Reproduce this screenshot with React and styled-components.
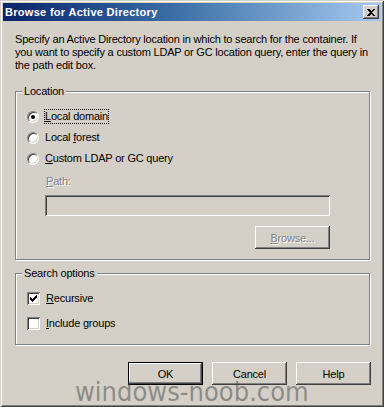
import React from 'react'
import styled, { createGlobalStyle, css } from 'styled-components'

const GlobalStyle = createGlobalStyle`
  html, body { margin: 0; padding: 0; background: #D4D0C8; }
  * { box-sizing: border-box; }
`

const face = '#D4D0C8'
const uiFont = `"Liberation Sans", Arial, sans-serif`

const Window = styled.div`
  position: relative;
  width: 384px;
  height: 407px;
  padding: 3px;
  overflow: hidden;
  background: ${face};
  display: flex;
  flex-direction: column;
  font-family: ${uiFont};
  font-size: 11px;
  letter-spacing: -0.2px;
  color: #000;
  box-shadow: inset 1px 1px ${face}, inset -1px -1px #404040, inset 2px 2px #fff, inset -2px -2px #808080;
`

const TitleBar = styled.div`
  height: 18px;
  display: flex;
  align-items: center;
  justify-content: space-between;
  padding: 0 2px 0 2px;
  background: linear-gradient(90deg, #0A246A 0%, #3A6EA5 45%, #A6CAF0 100%);
`

const Title = styled.span`
  color: #fff;
  font-weight: bold;
  font-size: 11px;
  letter-spacing: 0.3px;
`

const CloseBtn = styled.div`
  width: 16px;
  height: 14px;
  display: flex;
  align-items: center;
  justify-content: center;
  background: ${face};
  box-shadow: inset -1px -1px #404040, inset 1px 1px #fff, inset -2px -2px #808080;
`

const Content = styled.div`
  flex: 1;
  display: flex;
  flex-direction: column;
  padding: 12px 11px 0 12px;
`

const Description = styled.p`
  margin: 0;
  line-height: 13px;
`

const Group = styled.fieldset`
  margin: ${p => p.$top}px 0 0 0;
  padding: ${p => p.$pt}px 0 ${p => p.$pb}px 0;
  min-width: 0;
  border: 1px solid #808080;
  box-shadow: 1px 1px #fff, inset 1px 1px #fff;
  display: flex;
  flex-direction: column;
`

const Legend = styled.legend`
  margin-left: 6px;
  padding: 0 2px;
  line-height: 13px;
  background: ${face};
`

const OptionRow = styled.label`
  height: 21px;
  display: flex;
  align-items: center;
  gap: 6px;
  padding-left: 11px;
  margin-top: ${p => p.$gap || 0}px;
`

const RadioMark = styled.span`
  position: relative;
  width: 12px;
  height: 12px;
  flex: none;
  border-radius: 50%;
  background: #fff;
  border: 1px solid;
  border-color: #808080 #fff #fff #808080;
  box-shadow: inset 1px 1px #404040, inset -1px -1px ${face};
  ${p => p.$checked && css`
    &::after {
      content: '';
      position: absolute;
      left: 3px;
      top: 3px;
      width: 4px;
      height: 4px;
      border-radius: 50%;
      background: #000;
    }
  `}
`

const CheckMark = styled.span`
  width: 13px;
  height: 13px;
  flex: none;
  display: flex;
  align-items: center;
  justify-content: center;
  background: #fff;
  box-shadow: inset 1px 1px #808080, inset -1px -1px #fff, inset 2px 2px #404040, inset -2px -2px ${face};
`

const Caption = styled.span`
  line-height: 13px;
  ${p => p.$focus && css`
    outline: 1px dotted #000;
    outline-offset: 0;
  `}
`

const Key = styled.span`
  text-decoration: underline;
`

const Disabled = styled.span`
  color: #808080;
  text-shadow: 1px 1px #fff;
`

const PathLabel = styled.div`
  margin: 6px 0 0 30px;
  line-height: 13px;
`

const PathInput = styled.div`
  width: 285px;
  height: 21px;
  margin: 7px 0 0 29px;
  background: ${face};
  box-shadow: inset 1px 1px #808080, inset -1px -1px #fff, inset 2px 2px #404040, inset -2px -2px ${face};
`

const Button = styled.button`
  width: 75px;
  height: 23px;
  padding: 0;
  border: none;
  background: ${face};
  font-family: ${uiFont};
  font-size: 11px;
  letter-spacing: -0.2px;
  color: #000;
  box-shadow: inset -1px -1px #404040, inset 1px 1px #fff, inset -2px -2px #808080, inset 2px 2px ${face};
  ${p => p.$default && css`
    box-shadow: inset 0 0 0 1px #000, inset -2px -2px #404040, inset 2px 2px #fff, inset -3px -3px #808080;
  `}
`

const BrowseRow = styled.div`
  display: flex;
  justify-content: flex-end;
  margin: 10px 39px 0 0;
`

const ButtonBar = styled.div`
  display: flex;
  justify-content: flex-end;
  gap: 9px;
  margin: 17px -1px 0 0;
`

const Watermark = styled.div`
  position: absolute;
  left: 75px;
  top: 377px;
  font-family: "DejaVu Sans Condensed", "DejaVu Sans", sans-serif;
  font-size: 27px;
  line-height: 30px;
  letter-spacing: 0;
  color: rgba(70, 70, 70, 0.5);
  pointer-events: none;
  white-space: nowrap;
`

function Radio({ checked, focus, children }) {
  return (
    <OptionRow $gap={0}>
      <RadioMark $checked={checked} />
      <Caption $focus={focus}>{children}</Caption>
    </OptionRow>
  )
}

function Check({ checked, gap, children }) {
  return (
    <OptionRow $gap={gap}>
      <CheckMark>
        {checked && (
          <svg width="7" height="7" viewBox="0 0 7 7" shapeRendering="crispEdges">
            <path d="M0 2h1v1h1v1h1v-1h1v-1h1v-1h1v-1h1v3h-1v1h-1v1h-1v1h-1v1h-1v-1h-1v-1h-1z" fill="#000" />
          </svg>
        )}
      </CheckMark>
      <Caption>{children}</Caption>
    </OptionRow>
  )
}

export default function App() {
  return (
    <>
      <GlobalStyle />
      <Window>
        <TitleBar>
          <Title>Browse for Active Directory</Title>
          <CloseBtn>
            <svg width="8" height="7" viewBox="0 0 8 7" shapeRendering="crispEdges">
              <path d="M0 0h2l2 2 2-2h2L5 3.5 8 7H6L4 5 2 7H0l3-3.5z" fill="#000" />
            </svg>
          </CloseBtn>
        </TitleBar>
        <Content>
          <Description>
            Specify an Active Directory location in which to search for the container. If
            you want to specify a custom LDAP or GC location query, enter the query in
            the path edit box.
          </Description>

          <Group $top={13} $pt={8} $pb={10}>
            <Legend>Location</Legend>
            <Radio checked focus><Key>L</Key>ocal domain</Radio>
            <Radio>Local <Key>f</Key>orest</Radio>
            <Radio><Key>C</Key>ustom LDAP or GC query</Radio>
            <PathLabel><Disabled><Key>P</Key>ath:</Disabled></PathLabel>
            <PathInput />
            <BrowseRow>
              <Button disabled><Disabled><Key>B</Key>rowse...</Disabled></Button>
            </BrowseRow>
          </Group>

          <Group $top={7} $pt={8} $pb={10}>
            <Legend>Search options</Legend>
            <Check checked><Key>R</Key>ecursive</Check>
            <Check gap={4}><Key>I</Key>nclude groups</Check>
          </Group>

          <ButtonBar>
            <Button $default>OK</Button>
            <Button>Cancel</Button>
            <Button>Help</Button>
          </ButtonBar>
        </Content>
        <Watermark>windows-noob.com</Watermark>
      </Window>
    </>
  )
}
